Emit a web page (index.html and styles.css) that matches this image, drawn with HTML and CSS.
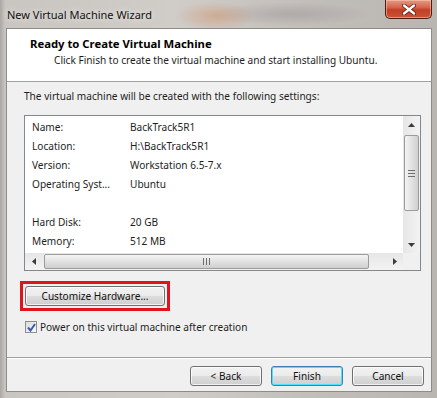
FILE: index.html
```html
<!DOCTYPE html>
<html lang="en">
<head>
    <meta charset="UTF-8">
    <title>New Virtual Machine Wizard</title>
    <link rel="stylesheet" href="styles.css">
</head>
<body>
    <div class="window">
        <div class="titlebar">
            <span class="title">New Virtual Machine Wizard</span>
            <div class="close-btn">
                <svg width="14" height="11" viewBox="0 0 14 11">
                    <path d="M2 1.5 L12 9.5 M12 1.5 L2 9.5" stroke="#5a1b10" stroke-width="4" stroke-linecap="round"/>
                    <path d="M2 1.5 L12 9.5 M12 1.5 L2 9.5" stroke="#fff" stroke-width="2.4" stroke-linecap="round"/>
                </svg>
            </div>
        </div>

        <div class="client">
            <div class="wizard-header">
                <div class="wizard-title">Ready to Create Virtual Machine</div>
                <div class="wizard-subtitle">Click Finish to create the virtual machine and start installing Ubuntu.</div>
            </div>

            <div class="wizard-body">
                <div class="intro">The virtual machine will be created with the following settings:</div>

                <div class="list-box">
                    <div class="list-content">
                        <div class="row"><span class="label">Name:</span><span class="value">BackTrack5R1</span></div>
                        <div class="row"><span class="label">Location:</span><span class="value">H:\BackTrack5R1</span></div>
                        <div class="row"><span class="label">Version:</span><span class="value">Workstation 6.5-7.x</span></div>
                        <div class="row"><span class="label">Operating Syst...</span><span class="value">Ubuntu</span></div>
                        <div class="row"></div>
                        <div class="row"><span class="label">Hard Disk:</span><span class="value">20 GB</span></div>
                        <div class="row"><span class="label">Memory:</span><span class="value">512 MB</span></div>
                    </div>

                    <!-- vertikalni scrollbar -->
                    <div class="vscroll">
                        <div class="arrow"><svg width="7" height="4" viewBox="0 0 7 4"><path d="M0 4 L3.5 0 L7 4 Z" fill="#3c3c3c"/></svg></div>
                        <div class="vthumb">
                            <svg width="7" height="7" viewBox="0 0 7 7"><path d="M0 0.5 H7 M0 3.5 H7 M0 6.5 H7" stroke="#6e6e6e"/></svg>
                        </div>
                        <div class="track"></div>
                        <div class="arrow"><svg width="7" height="4" viewBox="0 0 7 4"><path d="M0 0 L3.5 4 L7 0 Z" fill="#3c3c3c"/></svg></div>
                    </div>

                    <!-- horizontalni scrollbar -->
                    <div class="hscroll">
                        <div class="arrow"><svg width="4" height="7" viewBox="0 0 4 7"><path d="M4 0 L0 3.5 L4 7 Z" fill="#3c3c3c"/></svg></div>
                        <div class="hthumb">
                            <svg width="7" height="7" viewBox="0 0 7 7"><path d="M0.5 0 V7 M3.5 0 V7 M6.5 0 V7" stroke="#6e6e6e"/></svg>
                        </div>
                        <div class="track"></div>
                        <div class="arrow"><svg width="4" height="7" viewBox="0 0 4 7"><path d="M0 0 L4 3.5 L0 7 Z" fill="#3c3c3c"/></svg></div>
                    </div>

                    <div class="corner"></div>
                </div>

                <div class="customize-wrap">
                    <button class="btn btn-customize">Customize Hardware...</button>
                </div>

                <label class="check-row">
                    <span class="checkbox">
                        <svg width="9" height="9" viewBox="0 0 9 9"><path d="M1 4.5 L3.5 7.5 L8 1" fill="none" stroke="#3d5ba8" stroke-width="2"/></svg>
                    </span>
                    Power on this virtual machine after creation
                </label>
            </div>

            <div class="wizard-footer">
                <button class="btn">&lt; Back</button>
                <button class="btn btn-default">Finish</button>
                <button class="btn">Cancel</button>
            </div>
        </div>
    </div>
</body>
</html>
```

FILE: styles.css
```css
body {
    margin: 0;
    font-family: 'Noto Sans', 'Open Sans', sans-serif;
    font-size: 10.1px;
    color: #1e1e1e;
}
.window {
    width: 437px;
    height: 398px;
    box-sizing: border-box;
    padding: 0 5px 6px 6px;
    display: flex;
    flex-direction: column;
    background:
        radial-gradient(ellipse 40px 14px at 215px 16px, rgba(214, 120, 60, 0.35), transparent),
        radial-gradient(ellipse 80px 12px at 290px 14px, rgba(140, 130, 130, 0.35), transparent),
        linear-gradient(to right, #a9a6a3 0px, #c9c5c1 5px, #d0ccc8 40%, #c2beba 70%, #b9b5b1 100%);
}
.titlebar {
    height: 28px;
    display: flex;
    justify-content: space-between;
    align-items: flex-start;
}
.title {
    margin: 7px 0 0 1px;
    font-size: 11px;
    color: #111;
    text-shadow: 0 0 6px rgba(255, 255, 255, 0.9);
}
.close-btn {
    width: 45px;
    height: 18px;
    border: 1px solid #4d1d14;
    border-top: none;
    border-radius: 0 0 5px 5px;
    background: linear-gradient(to bottom, #e39a84 0%, #d4674e 40%, #c23f22 55%, #c9543a 100%);
    box-shadow: inset 0 0 0 1px rgba(255, 210, 190, 0.5);
    display: flex;
    justify-content: center;
    align-items: center;
}
.client {
    flex: 1;
    display: flex;
    flex-direction: column;
    background-color: #f0f0f0;
    border: 1px solid #8f8b88;
}
.wizard-header {
    height: 53px;
    box-sizing: border-box;
    background-color: #fff;
    border-bottom: 1px solid #a0a0a0;
    padding: 6px 0 0 23px;
    line-height: 17px;
}
.wizard-title {
    font-weight: bold;
    font-size: 11.3px;
    color: #000;
}
.wizard-subtitle {
    padding-left: 24px;
}
.wizard-body {
    flex: 1;
    display: flex;
    flex-direction: column;
    padding: 6px 10px 0 17px;
}
.intro {
    line-height: 16px;
}
.list-box {
    margin-top: 11px;
    height: 156px;
    box-sizing: border-box;
    border: 1px solid #828790;
    background-color: #fff;
    display: grid;
    grid-template-columns: 1fr 17px;
    grid-template-rows: 1fr 17px;
}
.list-content {
    padding: 2px 0 0 7px;
    overflow: hidden;
}
.row {
    display: flex;
    height: 19px;
    line-height: 19px;
}
.label {
    width: 98px;
}
.vscroll {
    display: flex;
    flex-direction: column;
    background: linear-gradient(to right, #e6e6e6, #f3f3f3);
}
.hscroll {
    display: flex;
    background: linear-gradient(to bottom, #e6e6e6, #f3f3f3);
}
.arrow {
    width: 17px;
    height: 17px;
    display: flex;
    justify-content: center;
    align-items: center;
    flex-shrink: 0;
}
.track {
    flex: 1;
}
.vthumb {
    margin: 2px 1px 0 1px;
    height: 76px;
    box-sizing: border-box;
    border: 1px solid #9b9b9b;
    border-radius: 2px;
    background: linear-gradient(to right, #f4f4f4, #e2e2e2 50%, #cfcfcf);
    display: flex;
    justify-content: center;
    align-items: center;
}
.hthumb {
    margin: 1px 0 1px 2px;
    width: 325px;
    box-sizing: border-box;
    border: 1px solid #9b9b9b;
    border-radius: 2px;
    background: linear-gradient(to bottom, #f4f4f4, #e2e2e2 50%, #cfcfcf);
    display: flex;
    justify-content: center;
    align-items: center;
}
.corner {
    background-color: #f0f0f0;
}
/* cerveny ramecek kolem tlacitka */
.customize-wrap {
    margin: 10px 0 0 -4px;
    align-self: flex-start;
    border: 3px solid #e0141c;
    padding: 2px;
    display: flex;
}
.btn {
    height: 20px;
    padding: 0;
    font-family: inherit;
    font-size: 10.1px;
    color: #111;
    border: 1px solid #707070;
    border-radius: 3px;
    background: linear-gradient(to bottom, #f2f2f2 0%, #ebebeb 48%, #dddddd 52%, #cfcfcf 100%);
    box-shadow: inset 0 0 0 1px rgba(255, 255, 255, 0.7);
}
.btn-customize {
    width: 140px;
}
.check-row {
    margin-top: 8px;
    display: flex;
    align-items: center;
    gap: 3px;
    line-height: 16px;
    padding-left: 1px;
}
.checkbox {
    width: 12px;
    height: 12px;
    box-sizing: border-box;
    border: 1px solid #8e8f8f;
    background: linear-gradient(135deg, #dcdcdc, #fafafa);
    display: flex;
    justify-content: center;
    align-items: center;
}
.wizard-footer {
    border-top: 1px solid #a0a0a0;
    box-shadow: inset 0 1px 0 #fff;
    padding: 8px 7px 5px 0;
    display: flex;
    justify-content: flex-end;
    gap: 9px;
}
.wizard-footer .btn {
    width: 72px;
    height: 20px;
}
.btn-default {
    border-color: #3c7fb1;
    box-shadow: inset 0 0 0 1px #4ee1ff;
}
```
